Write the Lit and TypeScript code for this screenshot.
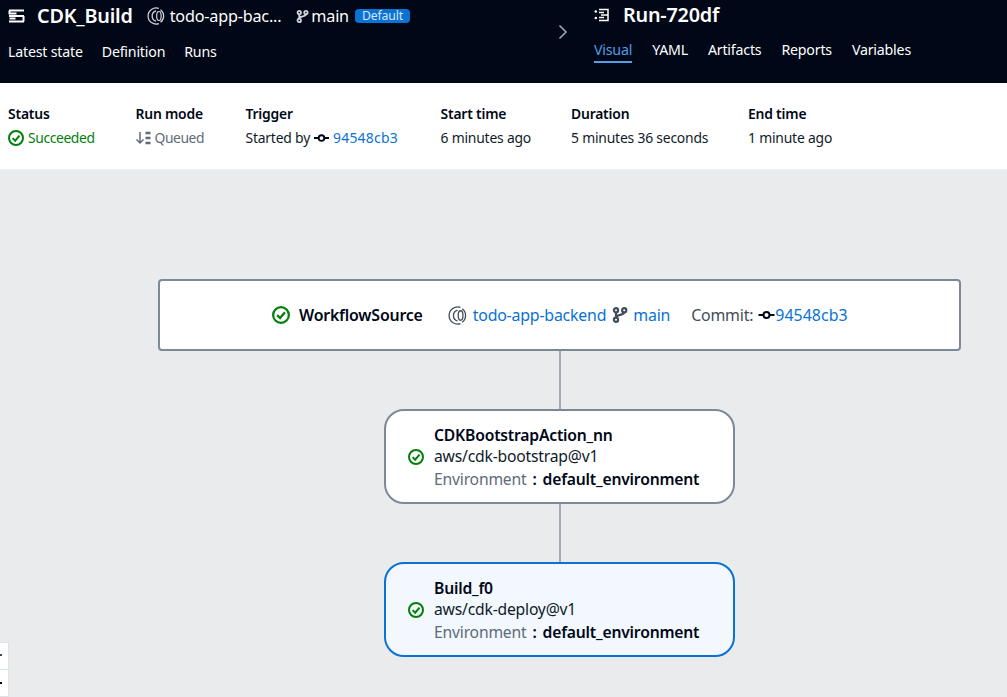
import { LitElement, html, css } from "lit";
import { customElement } from "lit/decorators.js";

const check = (size: number) => html`<svg class="ico" width=${size} height=${size} viewBox="0 0 16 16" fill="none" stroke="#037f0c" stroke-width="2"><circle cx="8" cy="8" r="7"/><path d="M4.6 8.1 7.2 10.7 11.5 5.6"/></svg>`;
const repo = (size: number, color: string) => html`<svg class="ico" width=${size} height=${size} viewBox="0 0 16 16" fill="none" stroke=${color} stroke-width="1.1"><path d="M10.5 1.2A7.2 7.2 0 1 0 10.5 14.8"/><path d="M8 3.4A4.8 4.8 0 0 0 8 12.6"/><path d="M12 2.4a7 7 0 0 1 0 11.2"/><ellipse cx="10.6" cy="8" rx="2" ry="4"/></svg>`;
const branch = (size: number, color: string) => html`<svg class="ico" width=${size} height=${size} viewBox="0 0 16 16" fill="none" stroke=${color} stroke-width="2.2"><circle cx="4" cy="3.2" r="2.1"/><circle cx="4" cy="12.8" r="2.1"/><circle cx="12.2" cy="3.2" r="2.1"/><path d="M4 5.3v5.4M12.2 5.3c0 3.4-8.2 1.8-8.2 5.4"/></svg>`;
const commit = (w: number, color: string) => html`<svg class="ico" width=${w} height="10" viewBox="0 0 16 10" fill="none" stroke=${color} stroke-width="2"><circle cx="8" cy="5" r="3"/><path d="M0 5h5M11 5h5"/></svg>`;

@customElement("app-root")
export class AppRoot extends LitElement {
  static styles = css`
    :host { display: flex; flex-direction: column; width: 1007px; height: 697px; overflow: hidden; position: relative; background: #e9ebed; font-family: "Noto Sans", "Open Sans", sans-serif; font-size: 14px; color: #0f1b2a; }
    .ico { flex: none; display: block; }
    a { color: #0972d3; text-decoration: none; }
    .header { height: 83px; flex: none; background: #000716; color: #fff; display: grid; grid-template-columns: 552px 42px 1fr; box-sizing: border-box; }
    .left { padding: 5px 0 0 8px; }
    .top { display: flex; align-items: center; height: 22px; }
    .title { font-size: 19.8px; font-weight: 600; line-height: 22px; letter-spacing: -0.2px; }
    .crumb { display: flex; align-items: center; gap: 5px; font-size: 16.2px; line-height: 22px; letter-spacing: -0.2px; white-space: nowrap; }
    .crumb.tight { gap: 2px; margin-left: 15px; }
    .badge { background: #0972d3; color: #d5e6f6; border-radius: 4px; font-size: 12.2px; line-height: 14px; padding: 0 7px; letter-spacing: -0.1px; margin-left: 6px; }
    .tabs { display: flex; font-size: 14.2px; line-height: 20px; letter-spacing: -0.2px; }
    .left .tabs { gap: 19px; margin-top: 15px; }
    .chev { display: flex; align-items: center; padding: 0 0 19px 6px; }
    .right { padding: 4px 0 0 0; }
    .right .top { gap: 14px; }
    .right .tabs { gap: 20px; margin-top: 14px; }
    .tab-active { color: #539fe5; border-bottom: 2px solid #539fe5; padding-bottom: 1px; }
    .summary { height: 86px; flex: none; background: #fff; display: flex; padding: 21px 0 0 8px; box-sizing: border-box; font-size: 13.9px; letter-spacing: -0.2px; line-height: 20px; }
    .col { display: flex; flex-direction: column; gap: 4px; }
    .label { font-weight: 600; color: #000716; }
    .val { display: flex; align-items: center; gap: 4px; white-space: nowrap; }
    .ok { color: #037f0c; letter-spacing: -0.4px; }
    .muted { color: #5f6b7a; gap: 3px; letter-spacing: -0.45px; }
    .muted .ico { margin-left: -1px; }
    .val a { letter-spacing: 0.25px; }
    .canvas { flex: 1; display: flex; flex-direction: column; align-items: center; padding: 110px 46px 0 158px; }
    .source { box-sizing: border-box; width: 803px; height: 72px; background: #fff; border: 2px solid #7d8998; border-radius: 4px; display: flex; align-items: center; font-size: 15.9px; letter-spacing: -0.2px; padding: 0 0 0 112px; white-space: nowrap; }
    .source b { font-weight: 600; color: #000716; margin-left: 9px; }
    .source .hash { letter-spacing: 0.05px; }
    .spacer-repo { width: 25px; }
    .spacer-branch { width: 6px; }
    .repo-link { margin-left: 6px; }
    .main-link { margin-left: 5px; }
    .commit-label { margin-left: 21px; margin-right: 5px; color: #414d5c; }
    .wire { width: 2px; height: 58px; background: #a0abb9; flex: none; }
    .node { box-sizing: border-box; width: 351px; height: 95px; background: #fff; border: 2px solid #7d8998; border-radius: 20px; display: flex; align-items: center; gap: 10px; padding: 0 0 0 22px; font-size: 15.7px; letter-spacing: -0.2px; flex: none; }
    .node.sel { background: #f2f8fd; border-color: #0972d3; }
    .node b { font-weight: 600; color: #000716; }
    .node .ico { margin-top: 1px; }
    .node .txt { white-space: nowrap; padding-top: 4px; }
    .r1, .r2 { line-height: 21px; }
    .r3 { line-height: 25px; }
    .env { color: #5f6b7a; }
    .colon { color: #000716; margin: 0 6px; font-weight: 600; }
    .stub { position: absolute; left: 0; bottom: 0; width: 9px; height: 55px; box-sizing: border-box; background: #fff; border: 1px solid #e0e2e4; border-left: 0; display: flex; flex-direction: column; }
    .stub div { flex: 1; position: relative; }
    .stub div + div { border-top: 1px solid #e0e2e4; }
    .stub i { position: absolute; left: 0; top: 11px; width: 2px; height: 2px; background: #414750; }
    .stub div + div i { background: #000; top: 12px; }
  `;

  private node(title: string, sub: string, sel = false) {
    return html`<div class="node ${sel ? "sel" : ""}">
      ${check(16)}
      <div class="txt">
        <div class="r1"><b>${title}</b></div>
        <div class="r2">${sub}</div>
        <div class="r3"><span class="env">Environment</span><span class="colon">:</span><b>default_environment</b></div>
      </div>
    </div>`;
  }

  render() {
    return html`
      <div class="header">
        <div class="left">
          <div class="top">
            <svg class="ico" width="17" height="14" viewBox="0 0 17 14" fill="none" stroke="#fff" stroke-width="2" style="margin-right:12px"><path d="M1 1.500h15M1 7h15M1 12.500h15M1.500 1.500v3h7M15.500 7v5.500M1.500 9.500h6"/></svg>
            <span class="title">CDK_Build</span>
            <span class="crumb" style="margin-left:14px">${repo(18, "#d1d5db")}<span>todo-app-bac...</span></span>
            <span class="crumb tight">${branch(13, "#d1d5db")}<span>main</span></span>
            <span class="badge">Default</span>
          </div>
          <div class="tabs"><span>Latest state</span><span>Definition</span><span>Runs</span></div>
        </div>
        <div class="chev"><svg width="10" height="16" viewBox="0 0 10 16" fill="none" stroke="#9ba7b6" stroke-width="1.600"><path d="M1.500 1.500 8 8l-6.500 6.500"/></svg></div>
        <div class="right">
          <div class="top">
            <svg class="ico" width="15" height="14" viewBox="0 0 15 14" fill="none" stroke="#fff" stroke-width="1.500"><circle cx="1.800" cy="3.500" r="1.300" fill="#fff" stroke="none"/><circle cx="1.800" cy="10" r="1.300" fill="#fff" stroke="none"/><path d="M5 1.500h9v11H5M7 7h7M5 4.500h5M5 9.500h5"/></svg>
            <span class="title">Run-720df</span>
          </div>
          <div class="tabs"><span class="tab-active">Visual</span><span>YAML</span><span>Artifacts</span><span>Reports</span><span>Variables</span></div>
        </div>
      </div>
      <div class="summary">
        <div class="col" style="width:127.500px"><span class="label">Status</span><span class="val ok">${check(16)}Succeeded</span></div>
        <div class="col" style="width:110px"><span class="label">Run mode</span><span class="val muted"><svg class="ico" width="17" height="14" viewBox="0 0 17 14" fill="none" stroke="#5f6b7a" stroke-width="1.500"><path d="M5 1v11M1.500 8.500 5 12l3.500-3.500"/><path d="M10.500 2h5M10.500 7h5M10.500 12h5" stroke-width="2.500"/></svg>Queued</span></div>
        <div class="col" style="width:195px"><span class="label">Trigger</span><span class="val">Started by ${commit(15, "#000716")}<a href="#">94548cb3</a></span></div>
        <div class="col" style="width:130.500px"><span class="label">Start time</span><span class="val">6 minutes ago</span></div>
        <div class="col" style="width:177px"><span class="label">Duration</span><span class="val">5 minutes 36 seconds</span></div>
        <div class="col"><span class="label">End time</span><span class="val">1 minute ago</span></div>
      </div>
      <div class="canvas">
        <div class="source">
          ${check(18)}<b>WorkflowSource</b>
          <span class="spacer-repo"></span>${repo(19, "#414d5c")}
          <a href="#" class="repo-link">todo-app-backend</a>
          <span class="spacer-branch"></span>${branch(16, "#414d5c")}
          <a href="#" class="main-link">main</a>
          <span class="commit-label">Commit:</span>${commit(17, "#000716")}<a href="#" class="hash">94548cb3</a>
        </div>
        <div class="wire"></div>
        ${this.node("CDKBootstrapAction_nn", "aws/cdk-bootstrap@v1")}
        <div class="wire"></div>
        ${this.node("Build_f0", "aws/cdk-deploy@v1", true)}
      </div>
      <div class="stub"><div><i></i></div><div><i></i></div></div>
    `;
  }
}
